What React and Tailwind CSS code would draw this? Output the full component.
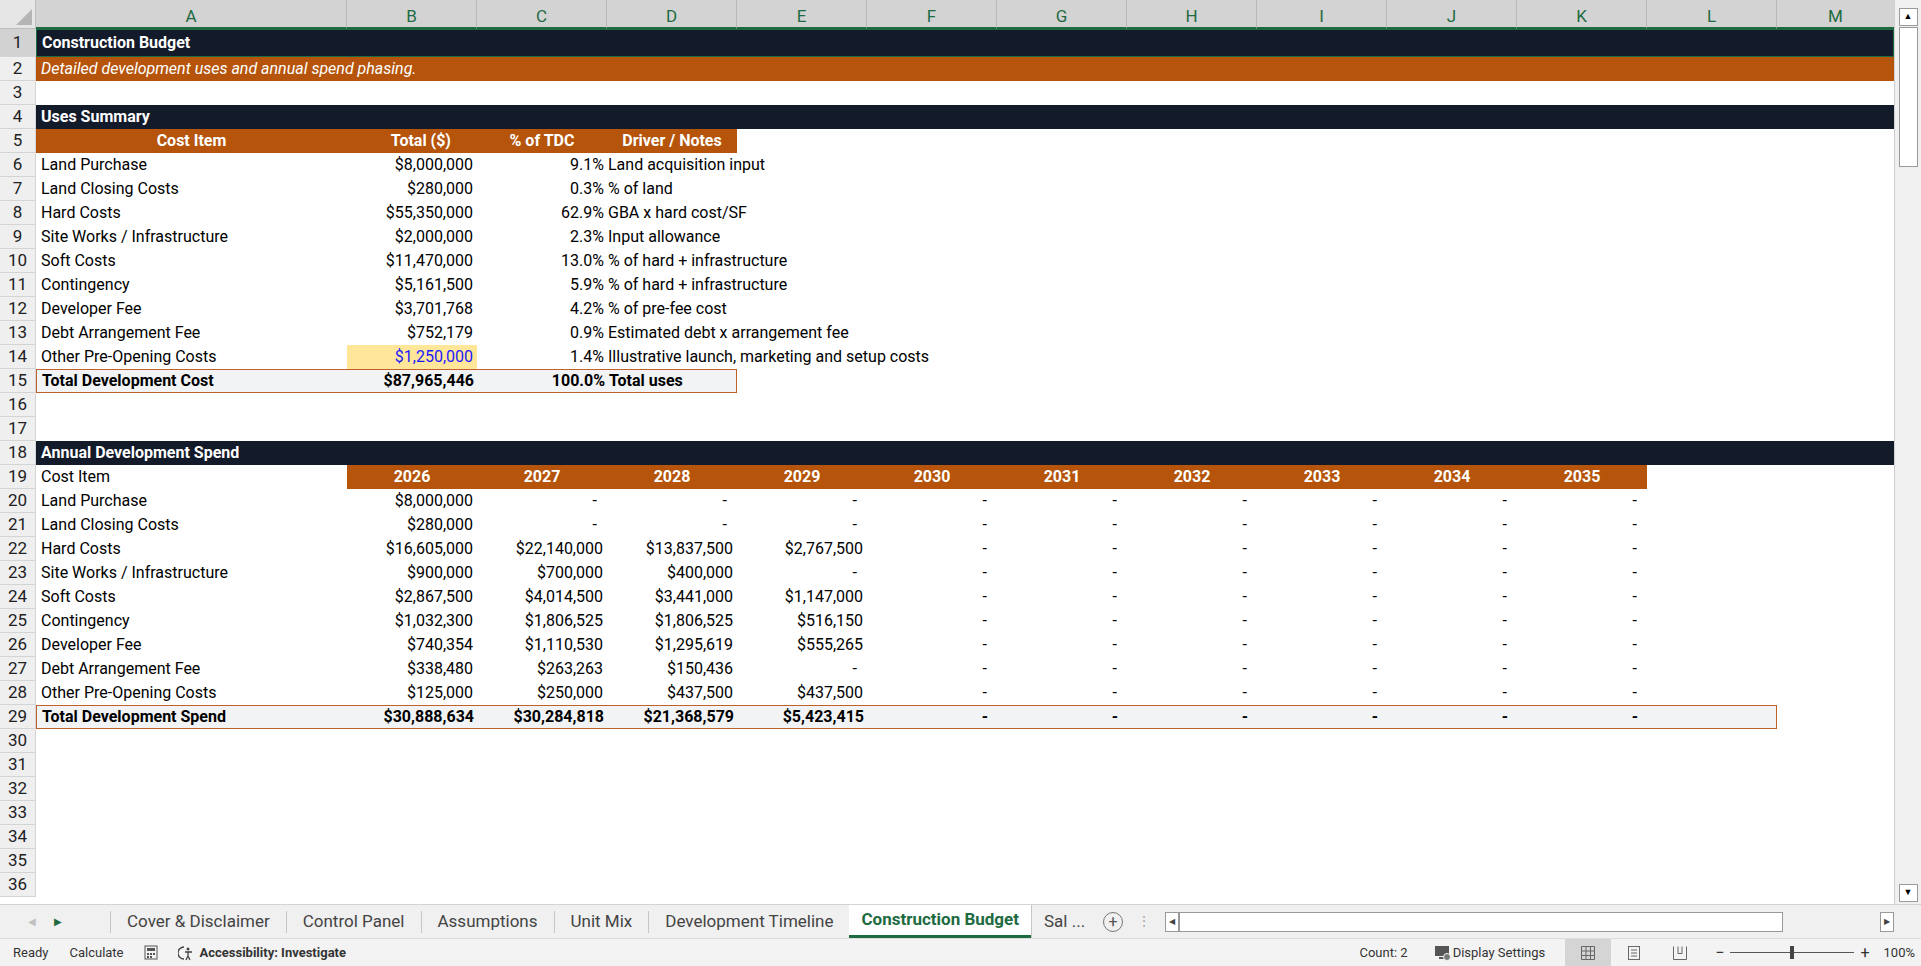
import React from "react";

const COLS = ["A","B","C","D","E","F","G","H","I","J","K","L","M"];
const W = [311,130,130,130,130,130,130,130,130,130,130,130,118];
const font = { fontFamily: "Roboto, 'Liberation Sans', sans-serif" };

function Cell({ i, children, cls = "" }) {
  return (
    <div className={"shrink-0 h-full flex items-center overflow-visible whitespace-nowrap " + cls} style={{ width: W[i] }}>
      {children}
    </div>
  );
}

function Row({ n, h = 24, children, cls = "" }) {
  return (
    <div className="flex" style={{ height: h }}>
      <div className={"w-[36px] shrink-0 flex items-center justify-center text-[17px] text-[#222] border-r border-b border-[#d4d4d4] overflow-hidden " + (n === 1 ? "bg-[#d2d2d2]" : "bg-[#efefef]")}>{n}</div>
      <div className={"flex flex-1 relative " + cls}>{children}</div>
    </div>
  );
}

const uses = [
  ["Land Purchase","$8,000,000","9.1%","Land acquisition input"],
  ["Land Closing Costs","$280,000","0.3%","% of land"],
  ["Hard Costs","$55,350,000","62.9%","GBA x hard cost/SF"],
  ["Site Works / Infrastructure","$2,000,000","2.3%","Input allowance"],
  ["Soft Costs","$11,470,000","13.0%","% of hard + infrastructure"],
  ["Contingency","$5,161,500","5.9%","% of hard + infrastructure"],
  ["Developer Fee","$3,701,768","4.2%","% of pre-fee cost"],
  ["Debt Arrangement Fee","$752,179","0.9%","Estimated debt x arrangement fee"],
  ["Other Pre-Opening Costs","$1,250,000","1.4%","Illustrative launch, marketing and setup costs"],
];

const spend = [
  ["Land Purchase","$8,000,000","-","-","-"],
  ["Land Closing Costs","$280,000","-","-","-"],
  ["Hard Costs","$16,605,000","$22,140,000","$13,837,500","$2,767,500"],
  ["Site Works / Infrastructure","$900,000","$700,000","$400,000","-"],
  ["Soft Costs","$2,867,500","$4,014,500","$3,441,000","$1,147,000"],
  ["Contingency","$1,032,300","$1,806,525","$1,806,525","$516,150"],
  ["Developer Fee","$740,354","$1,110,530","$1,295,619","$555,265"],
  ["Debt Arrangement Fee","$338,480","$263,263","$150,436","-"],
  ["Other Pre-Opening Costs","$125,000","$250,000","$437,500","$437,500"],
];

function Num({ v }) {
  if (v === "-") return <span className="ml-auto pr-[10px]">-</span>;
  return <span className="ml-auto pr-[4px]">{v}</span>;
}

export default function App() {
  const rows = [];
  rows.push(
    <Row key={1} n={1} h={28} cls="bg-[#131a29] border border-[#1e6b41] text-white font-bold">
      <div className="pl-[5px] flex items-center">Construction Budget</div>
    </Row>
  );
  rows.push(
    <Row key={2} n={2} cls="bg-[#b5540a] text-white italic">
      <div className="pl-[5px] flex items-center">Detailed development uses and annual spend phasing.</div>
    </Row>
  );
  rows.push(<Row key={3} n={3} />);
  rows.push(
    <Row key={4} n={4} cls="bg-[#131a29] text-white font-bold">
      <div className="pl-[5px] flex items-center">Uses Summary</div>
    </Row>
  );
  rows.push(
    <Row key={5} n={5}>
      <div className="flex bg-[#b5540a] text-white font-bold">
        <Cell i={0} cls="justify-center">Cost Item</Cell>
        <Cell i={1} cls="justify-end pr-[26px]">Total ($)</Cell>
        <Cell i={2} cls="justify-center">% of TDC</Cell>
        <Cell i={3} cls="justify-center">Driver / Notes</Cell>
      </div>
    </Row>
  );
  uses.forEach((u, k) => {
    const hl = k === 8;
    rows.push(
      <Row key={6 + k} n={6 + k}>
        <Cell i={0} cls="pl-[5px]">{u[0]}</Cell>
        <Cell i={1} cls={hl ? "bg-[#ffe699] text-[#1a1aff]" : ""}><Num v={u[1]} /></Cell>
        <Cell i={2}><span className="ml-auto pr-[3px]">{u[2]}</span></Cell>
        <Cell i={3} cls="pl-[1px]">{u[3]}</Cell>
      </Row>
    );
  });
  rows.push(
    <Row key={15} n={15}>
      <div className="flex bg-[#f2f3f5] border border-[#c0602a] font-bold" style={{ width: 701 }}>
        <Cell i={0} cls="pl-[5px]">Total Development Cost</Cell>
        <Cell i={1}><Num v="$87,965,446" /></Cell>
        <Cell i={2}><span className="ml-auto pr-[3px]">100.0%</span></Cell>
        <div className="flex items-center pl-[1px]">Total uses</div>
      </div>
    </Row>
  );
  rows.push(<Row key={16} n={16} />);
  rows.push(<Row key={17} n={17} />);
  rows.push(
    <Row key={18} n={18} cls="bg-[#131a29] text-white font-bold">
      <div className="pl-[5px] flex items-center">Annual Development Spend</div>
    </Row>
  );
  const years = [2026,2027,2028,2029,2030,2031,2032,2033,2034,2035];
  rows.push(
    <Row key={19} n={19}>
      <Cell i={0} cls="pl-[5px]">Cost Item</Cell>
      {years.map((y, j) => (
        <Cell key={y} i={j + 1} cls="justify-center bg-[#b5540a] text-white font-bold">{y}</Cell>
      ))}
    </Row>
  );
  spend.forEach((s, k) => {
    rows.push(
      <Row key={20 + k} n={20 + k}>
        <Cell i={0} cls="pl-[5px]">{s[0]}</Cell>
        {[1,2,3,4].map((j) => <Cell key={j} i={j}><Num v={s[j]} /></Cell>)}
        {[5,6,7,8,9,10].map((j) => <Cell key={j} i={j}><Num v="-" /></Cell>)}
      </Row>
    );
  });
  const tot = ["$30,888,634","$30,284,818","$21,368,579","$5,423,415"];
  rows.push(
    <Row key={29} n={29}>
      <div className="flex bg-[#f2f3f5] border border-[#c0602a] font-bold" style={{ width: 1741 }}>
        <Cell i={0} cls="pl-[5px]">Total Development Spend</Cell>
        {tot.map((t, j) => <Cell key={j} i={j + 1}><Num v={t} /></Cell>)}
        {[5,6,7,8,9,10].map((j) => <Cell key={j} i={j}><Num v="-" /></Cell>)}
      </div>
    </Row>
  );
  for (let n = 30; n <= 36; n++) rows.push(<Row key={n} n={n} />);

  return (
    <div className="w-[1921px] h-[966px] flex flex-col bg-white text-[16px] text-black overflow-hidden" style={font}>
      <div className="flex flex-1 min-h-0">
        <div className="flex-1 flex flex-col min-w-0 overflow-hidden">
          <div className="flex h-[29px] bg-[#e6e6e6] shrink-0">
            <div className="w-[36px] shrink-0 relative border-r border-b border-[#bdbdbd]">
              <svg className="absolute right-[3px] bottom-[3px]" width="16" height="16"><polygon points="16,0 16,16 0,16" fill="#b5b5b5" /></svg>
            </div>
            {COLS.map((c, i) => (
              <div key={c} className="shrink-0 flex items-center justify-center bg-[#d3d3d3] border-r border-[#b8b8b8] border-b-2 border-b-[#1e6b41] text-[#1e6b41] text-[17px] pt-[6px]" style={{ width: W[i] }}>{c}</div>
            ))}
          </div>
          <div className="flex flex-col">{rows}</div>
        </div>
        <div className="w-[27px] shrink-0 bg-[#f0f0f0] flex flex-col items-center pt-[8px] border-l border-[#cfcfcf]">
          <div className="w-[19px] h-[18px] border border-[#9a9a9a] bg-white flex items-center justify-center text-[9px]">▲</div>
          <div className="w-[19px] h-[140px] border border-[#9a9a9a] bg-white mt-[1px]" />
          <div className="flex-1" />
          <div className="w-[19px] h-[18px] border border-[#9a9a9a] bg-white flex items-center justify-center text-[9px] mb-[2px]">▼</div>
        </div>
      </div>
      <div className="h-[34px] shrink-0 bg-[#f0f0f0] flex items-center border-t border-[#d4d4d4] text-[17px] text-[#444]">
        <div className="w-[110px] flex items-center gap-[18px] pl-[28px] text-[10px]">
          <span className="text-[#c0c0c0]">◀</span><span className="text-[#1e6b41]">▶</span>
        </div>
        {["Cover & Disclaimer","Control Panel","Assumptions","Unit Mix","Development Timeline"].map((t) => (
          <div key={t} className="h-[22px] flex items-center px-[16px] border-l border-[#c6c6c6]">{t}</div>
        ))}
        <div className="h-full flex items-center px-[12px] bg-white text-[#1e6b41] font-bold border-b-[3px] border-[#1e6b41]">Construction Budget</div>
        <div className="h-full flex items-center px-[12px] border-l border-[#c6c6c6]">Sal ...</div>
        <div className="ml-[6px] w-[20px] h-[20px] rounded-full border border-[#777] flex items-center justify-center text-[16px] leading-none text-[#555]">+</div>
        <div className="mx-[14px] text-[#aaa] text-[14px]">⋮</div>
        <div className="flex-1 h-[20px] flex items-center mr-[27px]">
          <div className="w-[14px] h-[20px] border border-[#999] bg-white flex items-center justify-center text-[8px]">◀</div>
          <div className="w-[604px] h-[20px] border border-[#999] bg-white" />
          <div className="flex-1" />
          <div className="w-[14px] h-[20px] border border-[#999] bg-white flex items-center justify-center text-[8px]">▶</div>
        </div>
      </div>
      <div className="h-[28px] shrink-0 bg-[#f3f3f3] flex items-center text-[13px] text-[#333] border-t border-[#dcdcdc]">
        <span className="pl-[13px]">Ready</span>
        <span className="pl-[21px]">Calculate</span>
        <svg className="ml-[20px]" width="14" height="15" viewBox="0 0 14 15"><rect x="1" y="1" width="12" height="13" fill="none" stroke="#555"/><rect x="3" y="3" width="8" height="3" fill="#555"/><rect x="3" y="8" width="2" height="2" fill="#555"/><rect x="6" y="8" width="2" height="2" fill="#555"/><rect x="9" y="8" width="2" height="2" fill="#555"/><rect x="3" y="11" width="2" height="2" fill="#555"/><rect x="6" y="11" width="2" height="2" fill="#555"/></svg>
        <svg className="ml-[20px]" width="18" height="16" viewBox="0 0 18 16"><path d="M6 2a6 6 0 0 0 0 12" fill="none" stroke="#444" strokeWidth="1.3"/><circle cx="10" cy="4" r="1.5" fill="#444"/><path d="M7 7h7M10 7v4M8 15l2-4 2 4" stroke="#444" strokeWidth="1.3" fill="none"/></svg>
        <span className="pl-[4px] font-bold">Accessibility: Investigate</span>
        <div className="flex-1" />
        <span>Count: 2</span>
        <svg className="ml-[26px]" width="18" height="16" viewBox="0 0 18 16"><rect x="1" y="1" width="14" height="10" fill="#555"/><rect x="5" y="12" width="6" height="2" fill="#555"/><circle cx="13" cy="12" r="3.5" fill="#777" stroke="#f3f3f3"/></svg>
        <span className="pl-[1px]">Display Settings</span>
        <div className="ml-[20px] w-[46px] h-full bg-[#d5d5d5] flex items-center justify-center">
          <svg width="14" height="14"><path d="M0.5 0.5h13v13h-13zM0.5 5h13M0.5 9.5h13M5 0.5v13M9.5 0.5v13" stroke="#666" fill="none"/></svg>
        </div>
        <div className="w-[46px] flex justify-center"><svg width="12" height="14"><rect x="0.5" y="0.5" width="11" height="13" stroke="#666" fill="none"/><path d="M3 4h6M3 7h6M3 10h6" stroke="#666"/></svg></div>
        <div className="w-[46px] flex justify-center"><svg width="14" height="14"><path d="M0.5 0.5v13h13v-13M5 0.5v7h4v-7" stroke="#666" fill="none"/></svg></div>
        <span className="ml-[12px] text-[16px]">−</span>
        <div className="relative w-[124px] h-[1px] bg-[#555] mx-[6px]"><div className="absolute left-[60px] -top-[6px] w-[4px] h-[13px] bg-[#444]" /></div>
        <span className="text-[16px]">+</span>
        <span className="pl-[14px] pr-[6px]">100%</span>
      </div>
    </div>
  );
}
